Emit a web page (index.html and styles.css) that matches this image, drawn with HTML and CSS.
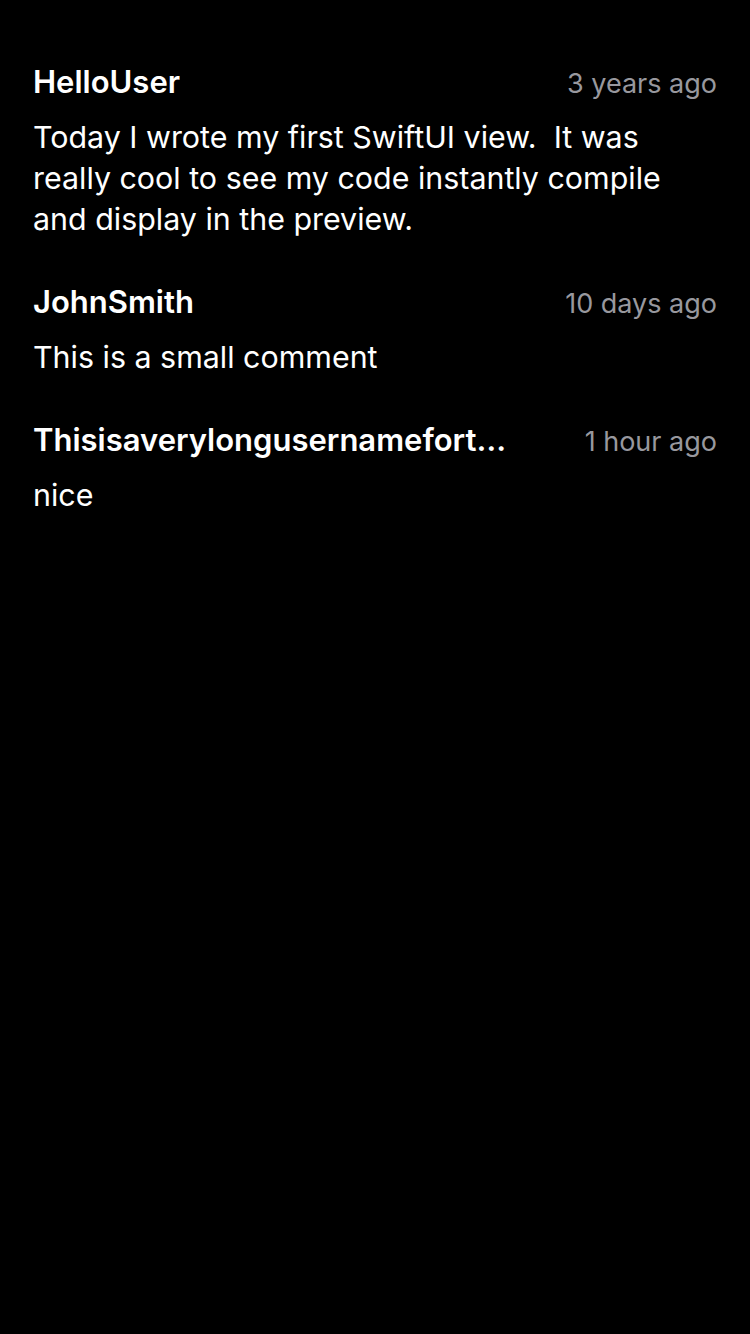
FILE: index.html
```html
<!DOCTYPE html>
<html>
<head>
<meta charset="utf-8">
<link rel="stylesheet" href="styles.css">
</head>
<body>
<main class="comments">
  <article class="comment">
    <header class="comment-head">
      <span class="user">HelloUser</span>
      <span class="time">3 years ago</span>
    </header>
    <p class="body">Today I wrote my first SwiftUI view.&nbsp; It was really cool to see my code instantly compile and display in the preview.</p>
  </article>
  <article class="comment">
    <header class="comment-head">
      <span class="user">JohnSmith</span>
      <span class="time">10 days ago</span>
    </header>
    <p class="body">This is a small comment</p>
  </article>
  <article class="comment">
    <header class="comment-head">
      <span class="user">Thisisaverylongusernamefort…</span>
      <span class="time">1 hour ago</span>
    </header>
    <p class="body">nice</p>
  </article>
</main>
</body>
</html>
```
FILE: styles.css
```css
html, body {
  margin: 0;
  padding: 0;
  background: #000;
  height: 100%;
}
body {
  font-family: Inter, "Noto Sans", "Liberation Sans", sans-serif;
  color: #fff;
}
.comments {
  padding: 62px 33px 0 33px;
  display: flex;
  flex-direction: column;
  gap: 42px;
}
.comment {
  display: flex;
  flex-direction: column;
  gap: 13px;
}
.comment-head {
  display: flex;
  justify-content: space-between;
  align-items: baseline;
  gap: 16px;
}
.user {
  font-size: 31px;
  font-weight: 600;
  line-height: 40px;
  white-space: nowrap;
  overflow: hidden;
  text-overflow: ellipsis;
  min-width: 0;
}
.time {
  font-size: 27px;
  color: #98989e;
  line-height: 40px;
  white-space: nowrap;
}
.body {
  margin: 0;
  font-size: 30.4px;
  line-height: 41px;
}
```
